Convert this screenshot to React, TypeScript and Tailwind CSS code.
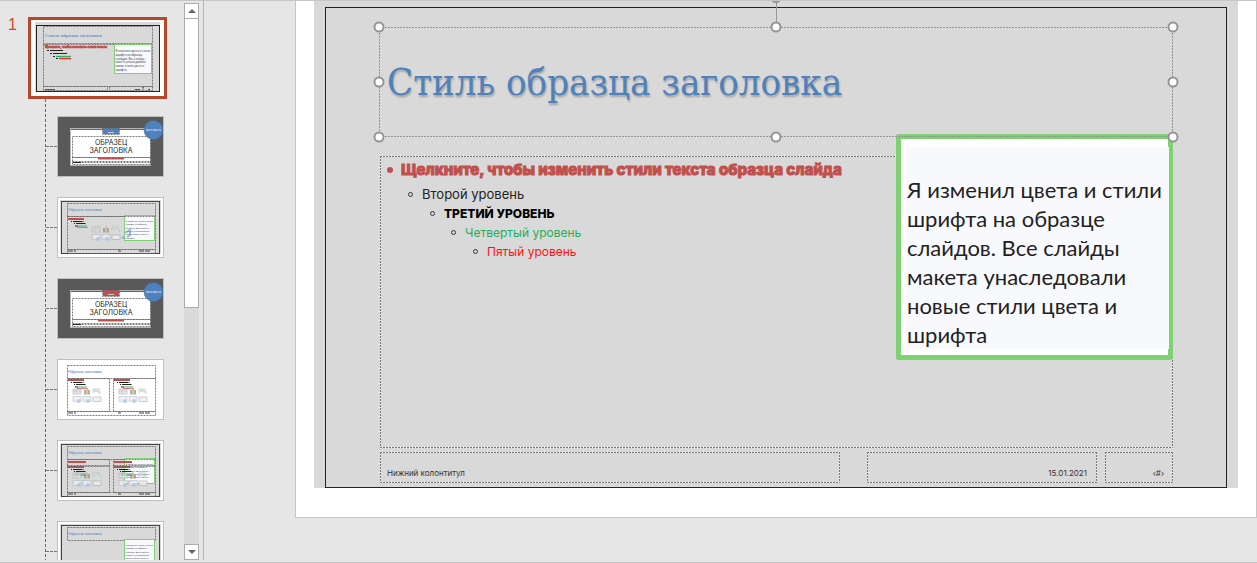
import type { ReactNode } from "react";
import clsx from "clsx";

type LayoutKind = "title" | "object" | "section" | "two" | "compare" | "titleOnly";

const layouts: { kind: LayoutKind; name: string }[] = [
  { kind: "title", name: "Титульный слайд" },
  { kind: "object", name: "Заголовок и объект" },
  { kind: "section", name: "Заголовок раздела" },
  { kind: "two", name: "Два объекта" },
  { kind: "compare", name: "Сравнение" },
  { kind: "titleOnly", name: "Только заголовок" },
];

const calloutLines = [
  "Я изменил цвета и стили",
  "шрифта на образце",
  "слайдов. Все слайды",
  "макета унаследовали",
  "новые стили цвета и",
  "шрифта",
];

const handles = [
  "left-0 top-0",
  "left-1/2 top-0",
  "left-full top-0",
  "left-0 top-1/2",
  "left-full top-1/2",
  "left-0 top-full",
  "left-1/2 top-full",
  "left-full top-full",
];

// one-pixel dashed outline, drawn as four background strips
const outline =
  "bg-no-repeat bg-[size:100%_1px,100%_1px,1px_100%,1px_100%] bg-[position:0_0,0_100%,0_0,100%_0] bg-[image:repeating-linear-gradient(90deg,#777_0_2px,#f4f4f4_2px_3px),repeating-linear-gradient(90deg,#777_0_2px,#f4f4f4_2px_3px),repeating-linear-gradient(180deg,#777_0_2px,#f4f4f4_2px_3px),repeating-linear-gradient(180deg,#777_0_2px,#f4f4f4_2px_3px)]";
const selectedOutline =
  "bg-no-repeat bg-[size:100%_1px,100%_1px,1px_100%,1px_100%] bg-[position:0_0,0_100%,0_0,100%_0] bg-[image:repeating-linear-gradient(90deg,#959595_0_2px,transparent_2px_3px),repeating-linear-gradient(90deg,#959595_0_2px,transparent_2px_3px),repeating-linear-gradient(180deg,#959595_0_2px,transparent_2px_3px),repeating-linear-gradient(180deg,#959595_0_2px,transparent_2px_3px)]";

function DashedRect(props: { x: number; y: number; w: number; h: number }) {
  return (
    <rect
      x={props.x + 0.5}
      y={props.y + 0.5}
      width={props.w}
      height={props.h}
      fill="none"
      stroke="#666"
      strokeOpacity="0.85"
      strokeDasharray="2 1"
    />
  );
}

function MiniCallout({ x, y, w, h, size }: { x: number; y: number; w: number; h: number; size: number }) {
  return (
    <g>
      <rect x={x} y={y} width={w} height={h} fill="#f8f9fc" stroke="#7fd173" />
      <g fontSize={size} fill="#444" fontFamily="Lato, sans-serif">
        {calloutLines.map((line, i) => (
          <text key={line} x={x + 1} y={y + h * 0.25 + i * h * 0.135}>
            {line}
          </text>
        ))}
      </g>
    </g>
  );
}

function MiniLevels({ x, y }: { x: number; y: number }) {
  return (
    <g>
      <rect x={x} y={y} width="16" height="2" fill="#c0504d" />
      <path d={`M${x + 3} ${y + 3.5}h13M${x + 6} ${y + 5.5}h12`} stroke="#222" strokeDasharray="1 1 9 0.5" />
      <path d={`M${x + 7} ${y + 8}h3`} stroke="#222" />
      <path d={`M${x + 10} ${y + 8}h9`} stroke="#35b870" />
      <path d={`M${x + 9} ${y + 9.5}h11`} stroke="#f0443c" strokeOpacity="0.7" />
    </g>
  );
}

function MiniIcons({ x, y }: { x: number; y: number }) {
  return (
    <g strokeWidth="0.6" opacity="0.8">
      <rect x={x} y={y} width="8" height="5" fill="#e0e0e0" stroke="#a9a9a9" />
      <path d={`M${x} ${y + 2}h8M${x + 3} ${y}v5`} stroke="#b5b5b5" />
      <rect x={x + 11} y={y + 1} width="2" height="4.5" fill="#7f9fc4" />
      <rect x={x + 13} y={y - 0.5} width="2" height="6" fill="#dfb765" />
      <rect x={x + 15} y={y + 1} width="2" height="4.5" fill="#9a9a9a" />
      <path d={`M${x + 20} ${y + 4}v-4h7M${x + 21} ${y + 2}h6v3`} stroke="#8fb8a4" fill="#dfe9e3" />
      <rect x={x} y={y + 7.5} width="8" height="5" fill="#e9eef3" stroke="#a9b4be" />
      <circle cx={x + 6} cy={y + 12} r="2" fill="#a9c5e4" />
      <rect x={x + 10} y={y + 7.5} width="8" height="5" fill="#e9eef3" stroke="#a9b4be" />
      <circle cx={x + 15} cy={y + 12} r="2" fill="#a9c5e4" />
      <rect x={x + 20} y={y + 8} width="8" height="4.5" fill="#eee" stroke="#a0a0a0" />
    </g>
  );
}

function MasterThumb() {
  return (
    <svg viewBox="0 0 133 76" className="block w-full" aria-hidden="true">
      <rect width="133" height="76" fill="#fff" />
      <rect x="4" y="2" width="125" height="70" fill="#d9d9d9" />
      <rect x="5.5" y="5.5" width="123" height="66" fill="none" stroke="#222" />
      <DashedRect x={12} y={6} w={109} h={17} />
      <DashedRect x={12} y={24} w={109} h={42} />
      <DashedRect x={12} y={66} w={64} h={4} />
      <DashedRect x={78} y={66} w={33} h={4} />
      <DashedRect x={112} y={66} w={9} h={4} />
      <text x="14" y="17" fontSize="5" fontWeight="700" fontFamily="Liberation Serif, serif" fill="#7292c4">
        Стиль образца заголовка
      </text>
      <text x="14" y="28" fontSize="3" fontWeight="700" stroke="#c0504d" strokeWidth="0.6" fill="#c0504d">
        Щелкните, чтобы изменить стили текста
      </text>
      <path d="M16 30.5h2M19 30.5h13M19 33.5h2M22 33.5h14M22 36.5h2M25 38.5h2" stroke="#222" />
      <path d="M25 36.5h15" stroke="#22b565" strokeWidth="1.3" />
      <path d="M28 38.5h12" stroke="#f22" strokeWidth="1.3" />
      <MiniCallout x={83.5} y={24.5} w={37} h={29} size={3} />
      <path d="M14 69.5h10M104 69.5h5M117 69.5h2" stroke="#555" />
    </svg>
  );
}

function CoverThumb({ tag }: { tag: string }) {
  return (
    <svg viewBox="0 0 105 59" className="block w-full" aria-hidden="true">
      <rect width="105" height="59" fill="#595959" />
      <rect x="12.5" y="11.5" width="80" height="37" fill="#fff" stroke="#b5b5b5" />
      <path d="M13 12.5h79" stroke="#666" />
      <rect x="45" y="11" width="16" height="6" fill={tag} />
      <DashedRect x={44} y={11} w={17} h={6} />
      <path d="M50 15.5h6" stroke="#dde5f0" strokeWidth="0.8" />
      <DashedRect x={14} y={19} w={78} h={21} />
      <DashedRect x={14} y={40} w={78} h={5} />
      <DashedRect x={14} y={44} w={78} h={3} />
      <g fontSize="7" textAnchor="middle" fill="#222">
        <text x="53" y="28">ОБРАЗЕЦ</text>
        <text x="53" y="36">ЗАГОЛОВКА</text>
      </g>
      <path d="M40 41.5h26" stroke="#c0504d" strokeWidth="2" />
      <path d="M15 45.5h8" stroke="#222" />
      <circle cx="95.5" cy="13" r="9.5" fill="#4f81bd" stroke="#3d6da6" strokeWidth="0.5" />
      <path d="M88 13h15" stroke="#dfe9f5" strokeDasharray="4 0.5 2 0.5" />
    </svg>
  );
}

function LayoutThumb({ kind }: { kind: LayoutKind }) {
  if (kind === "title") return <CoverThumb tag="#4f81bd" />;
  if (kind === "section") return <CoverThumb tag="#c0504d" />;

  const split = kind === "two" || kind === "compare";

  return (
    <svg viewBox="0 0 105 59" className="block w-full" aria-hidden="true">
      <rect width="105" height="59" fill="#fff" />
      {kind !== "two" && (
        <g>
          <rect x="2" y="2" width="101" height="54" fill="#d9d9d9" />
          <rect x="3.5" y="3.5" width="98" height="52" fill="none" stroke="#444" />
        </g>
      )}
      <DashedRect x={9} y={5} w={88} h={13} />
      <text x="10" y="13" fontSize="4" fontWeight="700" fontFamily="Liberation Serif, serif" fill="#7b98c6">
        Образец заголовка
      </text>
      {kind !== "two" && <MiniCallout x={66.5} y={17.5} w={30} h={25} size={2.4} />}
      {kind === "object" && (
        <g>
          <DashedRect x={9} y={18} w={88} h={33} />
          <MiniLevels x={10} y={20} />
          <MiniIcons x={34} y={29} />
          <path d="M64 40l3-1M67 35l5-3v5l-3 2" stroke="#6f9dd0" strokeOpacity="0.7" strokeWidth="2" fill="none" />
        </g>
      )}
      {split && (
        <g>
          <DashedRect x={9} y={18} w={42} h={33} />
          <DashedRect x={55} y={18} w={42} h={33} />
          <MiniLevels x={10} y={kind === "two" ? 19 : 25} />
          <MiniLevels x={56} y={kind === "two" ? 19 : 25} />
          <MiniIcons x={15} y={kind === "two" ? 29 : 32} />
          <MiniIcons x={61} y={kind === "two" ? 29 : 32} />
        </g>
      )}
      {kind === "compare" && (
        <g>
          <path d="M10 21h18M56 21h18" stroke="#c0504d" strokeWidth="2" />
          <DashedRect x={9} y={24} w={42} h={1} />
          <DashedRect x={55} y={24} w={42} h={1} />
        </g>
      )}
      <DashedRect x={9} y={51} w={88} h={4} />
      <path d="M10 53h8M60 53h3M81 53h12" stroke="#444" strokeDasharray="5 1" />
    </svg>
  );
}

function ScrollButton({ down }: { down?: boolean }) {
  return (
    <button
      aria-label={down ? "Прокрутить вниз" : "Прокрутить вверх"}
      className="flex h-4 w-full shrink-0 items-center justify-center border border-[#ababab] bg-white"
    >
      <svg viewBox="0 0 8 4" className={clsx("h-1 w-2", down && "rotate-180")} aria-hidden="true">
        <path d="M4 0L8 4H0z" fill="#666" />
      </svg>
    </button>
  );
}

function Sidebar() {
  return (
    <aside className="mb-0.5 flex shrink-0 border-r border-[#b5b5b5]">
      <div className="w-[184px] overflow-hidden pt-4">
        <div className="flex">
          <span className="w-7 pl-2 font-['Liberation_Sans',sans-serif] text-base leading-4 text-[#d24726]">1</span>
          <button aria-label="Образец слайдов" className="w-[139px] border-[3px] border-[#b7472a]">
            <MasterThumb />
          </button>
        </div>
        <ul className="ml-[45px] flex flex-col gap-5 border-l border-dashed border-[#666] pt-[17px]">
          {layouts.map((layout) => (
            <li key={layout.kind} className="flex items-center">
              <span className="w-[11px] border-t border-dashed border-[#777]" />
              <button aria-label={layout.name} className="w-[107px] border border-[#bfbfbf]">
                <LayoutThumb kind={layout.kind} />
              </button>
            </li>
          ))}
        </ul>
      </div>
      <div className="mr-1 mt-0.5 flex w-[15px] flex-col bg-[#dadada]">
        <ScrollButton />
        <div className="-mt-px h-[52%] border border-[#ababab] bg-white" />
        <div className="grow" />
        <ScrollButton down />
      </div>
    </aside>
  );
}

function Level({ className, children }: { className: string; children: ReactNode }) {
  return (
    <li className={clsx("flex items-center", className)}>
      <span className="mr-[9px] size-[5px] shrink-0 rounded-full border border-[#333]" />
      {children}
    </li>
  );
}

function Slide() {
  return (
    <div className="bg-[#d9d9d9] px-[11px] pt-[6px]">
      <div className="relative border border-[#222] px-[53px] pb-1 pt-[19px]">
        {/* Title */}
        <div className={clsx("relative z-20 flex h-[110px] items-center pl-2", selectedOutline)}>
          <span className="absolute -top-[35px] left-1/2 size-[11px] -translate-x-1/2 rounded-full border-2 border-[#959595]" />
          <span className="absolute -top-6 left-1/2 h-6 w-px bg-[#959595]" />
          <h1 className="font-['DejaVu_Serif_Condensed','DejaVu_Serif',serif] text-[38px] leading-none text-[#4f81bd] [text-shadow:1px_2px_2px_rgba(0,0,0,0.25)]">
            Стиль образца заголовка
          </h1>
          {handles.map((place) => (
            <span
              key={place}
              className={clsx(
                "absolute size-[11px] -translate-x-1/2 -translate-y-1/2 rounded-full border-2 border-[#959595] bg-white",
                place,
              )}
            />
          ))}
        </div>

        {/* Text levels */}
        <div className={clsx("mt-[19px] ml-px h-[292px] pl-[7px] pt-1", outline)}>
          <ul className="text-xs leading-[19px]">
            <li className="flex items-center text-[15px] font-extrabold leading-5 text-[#c0504d] [-webkit-text-stroke:1px_#c0504d]">
              <span className="mr-2 size-[6px] shrink-0 rounded-full bg-[#c0504d]" />
              Щелкните, чтобы изменить стили текста образца слайда
            </li>
            <Level className="mt-[5px] pl-[21px] text-[13px] text-[#222]">Второй уровень</Level>
            <Level className="pl-[43px] font-extrabold text-black">ТРЕТИЙ УРОВЕНЬ</Level>
            <Level className="pl-[64px] text-[#1fae5c]">Четвертый уровень</Level>
            <Level className="pl-[86px] text-[#f11]">Пятый уровень</Level>
          </ul>
        </div>

        {/* Footer */}
        <div className="mt-1 ml-px flex h-[31px] text-[8px] leading-3 text-[#333]">
          <div className={clsx("w-[58%] pl-[7px] pt-[15px]", outline)}>Нижний колонтитул</div>
          <div className={clsx("ml-auto mr-2 w-[29%] pr-[10px] pt-[15px] text-right", outline)}>15.01.2021</div>
          <div className={clsx("w-[68px] pr-[9px] pt-[15px] text-right", outline)}>‹#›</div>
        </div>

        {/* Callout laid over the placeholders */}
        <div className="absolute right-[53px] top-[126px] z-10 w-[277px] rounded-xs border-[5px] border-[#7fd173] bg-white pb-[6px] pl-[6px] pt-2">
          <p className="-mr-px bg-[#f8f9fc] pt-7 font-[Lato,sans-serif] text-[22px] leading-[29px] text-[#222]">
            {calloutLines.map((line) => (
              <span key={line} className="block whitespace-nowrap">
                {line}
              </span>
            ))}
          </p>
        </div>
      </div>
    </div>
  );
}

export default function App() {
  return (
    <div className="flex h-screen overflow-hidden border-y border-[#c6c6c6] bg-[#e6e6e6] font-[Inter,sans-serif]">
      <Sidebar />
      <main className="min-w-0 grow pl-[91px]">
        <div className="border-x border-b border-[#c6c6c6] bg-white pb-[29px] pl-[18px] pr-[18px]">
          <Slide />
        </div>
      </main>
    </div>
  );
}
